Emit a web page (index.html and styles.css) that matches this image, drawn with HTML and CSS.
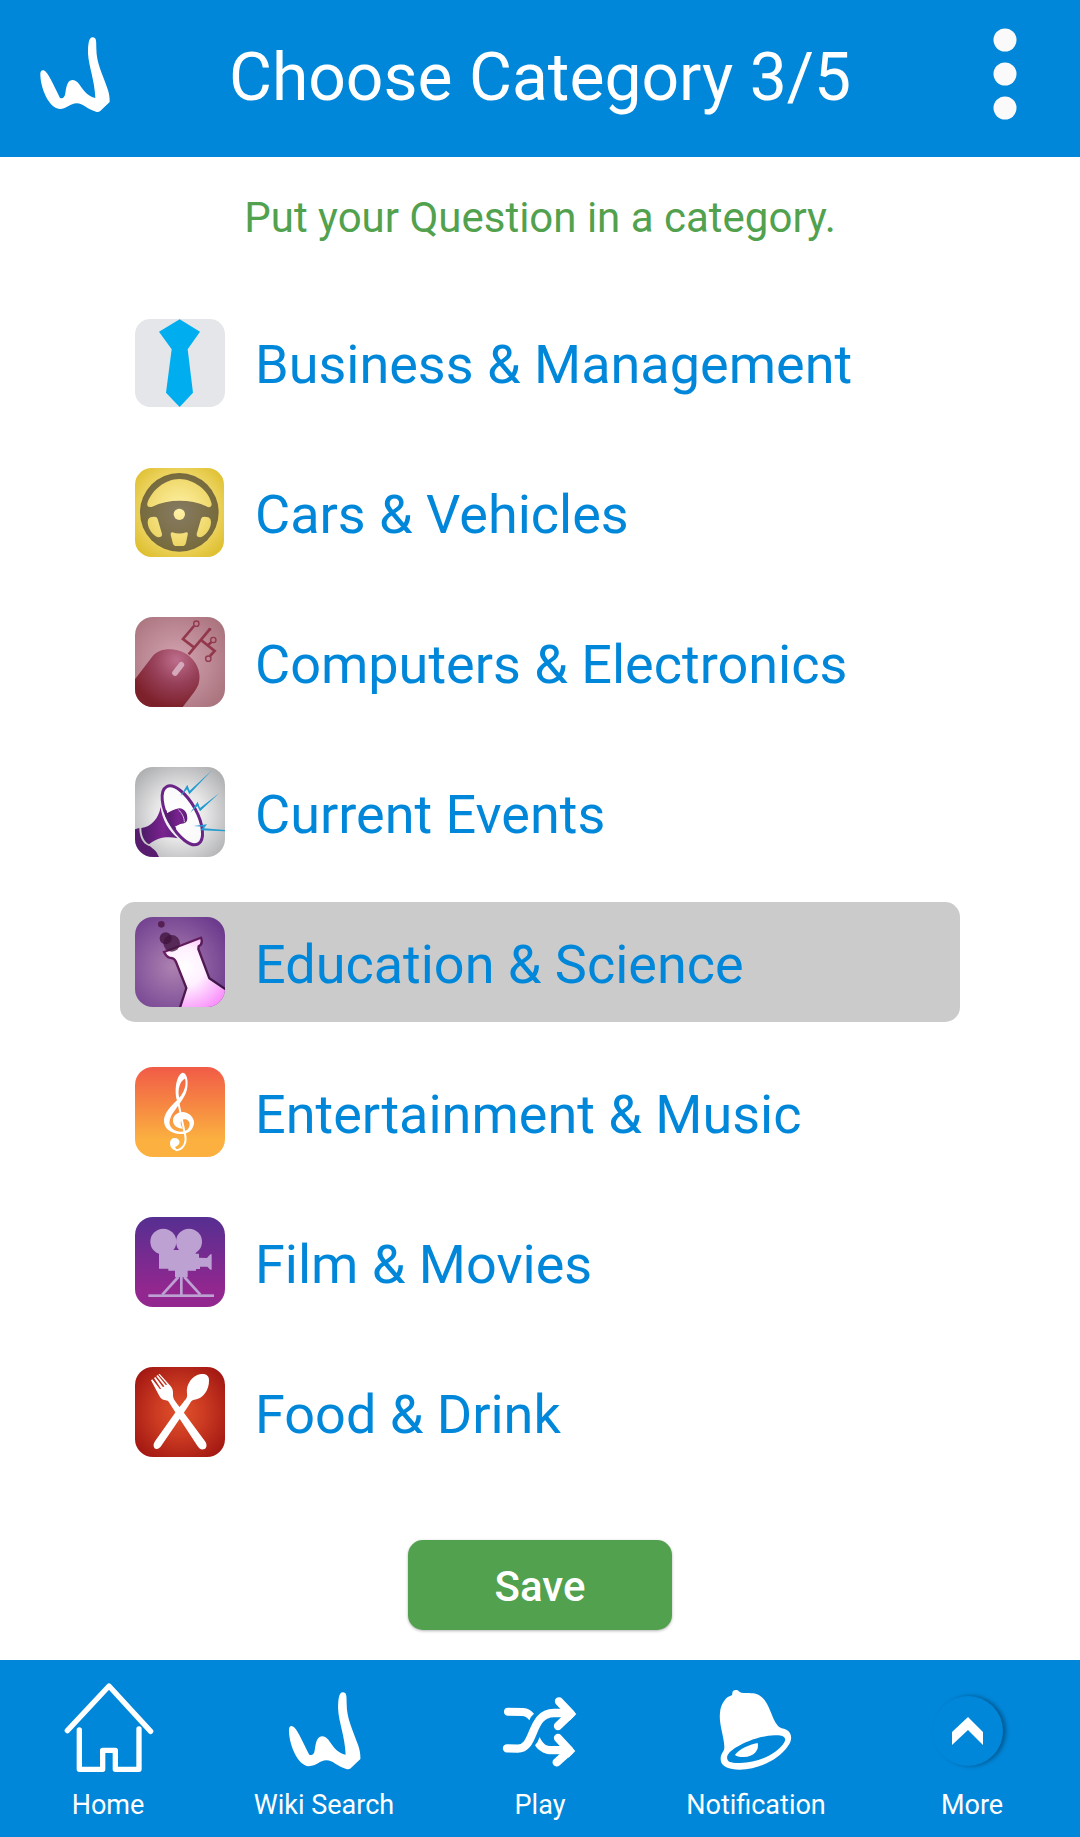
FILE: index.html
```html
<!DOCTYPE html>
<html lang="en">
<head>
    <meta charset="UTF-8">
    <meta name="viewport" content="width=device-width, initial-scale=1.0">
    <title>Choose Category</title>
    <link rel="stylesheet" href="styles.css">
</head>
<body>
    <header class="topbar">
        <a class="logo" href="#" aria-label="Wiki">
            <svg viewBox="61 51 208 225">
                <path id="w-mark" d="M61 160C62 152 66 149 71 151C84 155 99 193 120 234C128 236 134 234 136 220C140 190 146 180 158 180C182 180 184 224 226 234C224 180 206 140 204 100C204 74 206 52 218 52C229 52 229 62 229 85C229 130 247 160 262 205C268 222 269 232 269 246L240 274C236 276 232 276 228 275C200 268 190 250 170 250C150 250 142 267 119 267C85 265 60 200 61 160Z"/>
            </svg>
        </a>
        <h1>Choose Category 3/5</h1>
        <button class="menu" type="button" aria-label="Menu">
            <svg viewBox="0 0 24 92">
                <circle cx="12" cy="12" r="11.5"/>
                <circle cx="12" cy="46" r="11.5"/>
                <circle cx="12" cy="80" r="11.5"/>
            </svg>
        </button>
    </header>

    <form class="content">
        <p class="hint">Put your Question in a category.</p>

        <div class="categories">
            <label class="category">
                <input type="radio" name="category" value="business">
                <svg viewBox="30 21 270 270">
                    <rect x="30" y="27" width="270" height="264" rx="46" fill="#e4e6e9"/>
                    <path d="M164 28L225 65L188 118L204 248L164 291L123 248L140 118L102 65Z" fill="#00aeef"/>
                </svg>
                <span>Business &amp; Management</span>
            </label>

            <label class="category">
                <input type="radio" name="category" value="cars">
                <svg viewBox="30 471 270 270">
                    <defs>
                        <radialGradient id="gold" gradientUnits="userSpaceOnUse" cx="163" cy="600" r="180">
                            <stop offset="0" stop-color="#fff2a8"/>
                            <stop offset="0.55" stop-color="#efd86a"/>
                            <stop offset="1" stop-color="#dcbc28"/>
                        </radialGradient>
                        <radialGradient id="wheel" gradientUnits="userSpaceOnUse" cx="163" cy="607" r="120">
                            <stop offset="0" stop-color="#877b63"/>
                            <stop offset="1" stop-color="#766a3c"/>
                        </radialGradient>
                    </defs>
                    <rect x="30" y="474" width="267" height="267" rx="50" fill="url(#gold)"/>
                    <circle cx="163" cy="607" r="118" fill="url(#wheel)"/>
                    <g fill="url(#gold)">
                        <path d="M163 507C205 507 252 540 260 582C260 592 250 594 244 589C195 567 130 567 82 590C70 594 65 588 67 580C80 540 121 507 163 507Z"/>
                        <path d="M76 622L88 620Q96 620 98 627L111 672Q112 682 100 682C82 676 68 655 68 635Q68 626 76 622Z"/>
                        <path d="M250 622L238 620Q230 620 228 627L215 672Q214 682 226 682C244 676 258 655 258 635Q258 626 250 622Z"/>
                        <path d="M142 667Q163 674 184 667Q190 667 188 674L183 698Q181 708 171 708L155 708Q145 708 143 698L137 674Q136 667 142 667Z"/>
                        <circle cx="163" cy="613" r="17"/>
                    </g>
                </svg>
                <span>Cars &amp; Vehicles</span>
            </label>

            <label class="category">
                <input type="radio" name="category" value="computers">
                <svg class="rounded" viewBox="30 21 270 270">
                    <defs>
                        <radialGradient id="rose" gradientUnits="userSpaceOnUse" cx="155" cy="155" r="180">
                            <stop offset="0" stop-color="#d3a5b2"/>
                            <stop offset="1" stop-color="#a9727c"/>
                        </radialGradient>
                        <radialGradient id="mouse" gradientUnits="userSpaceOnUse" cx="155" cy="150" r="145">
                            <stop offset="0" stop-color="#bd6e8c"/>
                            <stop offset="0.5" stop-color="#963f58"/>
                            <stop offset="1" stop-color="#7c2029"/>
                        </radialGradient>
                    </defs>
                    <rect x="30" y="21" width="270" height="270" fill="url(#rose)"/>
                    <path d="M30 208L85 136C105 113 150 112 180 130C215 150 232 190 220 224C213 242 190 268 173 291H30Z" fill="url(#mouse)"/>
                    <path d="M150 189L169 164" stroke="#d6a8bb" stroke-width="17" stroke-linecap="round"/>
                    <g fill="none" stroke="#93384c" stroke-width="8">
                        <path d="M191 133L254 58M207 112L174 87L207 48M227 89L269 123L255 138M248 106L259 97"/>
                        <circle cx="214" cy="41" r="8" stroke-width="4"/>
                        <circle cx="265" cy="90" r="8" stroke-width="4"/>
                        <circle cx="250" cy="146" r="8" stroke-width="4"/>
                    </g>
                    <circle cx="254" cy="58" r="5" fill="#93384c"/>
                </svg>
                <span>Computers &amp; Electronics</span>
            </label>

            <label class="category">
                <input type="radio" name="category" value="events">
                <svg class="rounded" viewBox="30 21 270 270">
                    <defs>
                        <radialGradient id="silver" gradientUnits="userSpaceOnUse" cx="165" cy="165" r="190">
                            <stop offset="0" stop-color="#ffffff"/>
                            <stop offset="0.4" stop-color="#e6e6e7"/>
                            <stop offset="1" stop-color="#a5a6a8"/>
                        </radialGradient>
                        <linearGradient id="horn" x1="0" y1="0" x2="1" y2="0">
                            <stop offset="0" stop-color="#4d1a66"/>
                            <stop offset="0.6" stop-color="#7a2390"/>
                            <stop offset="1" stop-color="#5b1f78"/>
                        </linearGradient>
                    </defs>
                    <rect x="30" y="21" width="270" height="270" fill="url(#silver)"/>
                    <path d="M107 141C100 178 78 200 49 204C49 227 57 245 72 253C100 231 128 229 158 235C132 212 111 180 107 141Z" fill="url(#horn)"/>
                    <path d="M30 208L43 204C43 230 52 250 70 257C78 258 80 264 86 268C95 274 97 283 102 291H30Z" fill="#571c6e"/>
                    <ellipse cx="172" cy="166" rx="43" ry="98" transform="rotate(-29 172 166)" fill="#ffffff" fill-opacity="0.8" stroke="#6a2387" stroke-width="9"/>
                    <path d="M120 163C133 156 146 148 162 145C178 144 188 160 187 176C186 188 178 190 166 192L148 201C136 193 124 178 120 163Z" fill="url(#horn)"/>
                    <path d="M121 151C124 172 136 196 152 207" fill="none" stroke="#5b1f78" stroke-width="7"/>
                    <path d="M160 149C170 158 178 172 178 187" fill="none" stroke="#d5bede" stroke-width="3"/>
                    <g fill="#229bd0">
                        <path d="M166 109L187 74L194 92L261 31L193 103L186 88Z"/>
                        <path d="M196 158L218 125L225 144L283 99L225 154L217 138Z"/>
                        <path d="M206 198L246 193L237 205L300 210V214L226 211L235 200Z"/>
                    </g>
                </svg>
                <span>Current Events</span>
            </label>

            <label class="category">
                <input type="radio" name="category" value="education" checked>
                <svg class="rounded" viewBox="75 66 270 270">
                    <defs>
                        <radialGradient id="violet" gradientUnits="userSpaceOnUse" cx="190" cy="215" r="185">
                            <stop offset="0" stop-color="#ad82b1"/>
                            <stop offset="1" stop-color="#6d3b8e"/>
                        </radialGradient>
                        <radialGradient id="glass" gradientUnits="userSpaceOnUse" cx="225" cy="215" r="145">
                            <stop offset="0" stop-color="#ffffff"/>
                            <stop offset="0.4" stop-color="#fff0ff"/>
                            <stop offset="1" stop-color="#f990fb"/>
                        </radialGradient>
                        <linearGradient id="edge" x1="0" y1="0" x2="1" y2="1">
                            <stop offset="0" stop-color="#722064"/>
                            <stop offset="1" stop-color="#2b123f"/>
                        </linearGradient>
                    </defs>
                    <rect x="75" y="66" width="270" height="270" fill="url(#violet)"/>
                    <path d="M162 171L273 128C277 138 277 148 266 154L265 162L298 250L352 286V350H206L229 279L198 201C193 188 186 190 178 188C169 186 166 178 162 171Z" fill="url(#glass)" stroke="url(#edge)" stroke-width="7"/>
                    <circle cx="154" cy="88" r="10" fill="#552051"/>
                    <circle cx="167" cy="130" r="18" fill="#40143e" fill-opacity="0.8"/>
                    <circle cx="185" cy="145" r="25" fill="#40143e" fill-opacity="0.75"/>
                </svg>
                <span>Education &amp; Science</span>
            </label>

            <label class="category">
                <input type="radio" name="category" value="music">
                <svg class="rounded" viewBox="30 21 270 270">
                    <defs>
                        <linearGradient id="sunset" x1="0" y1="0" x2="0" y2="1">
                            <stop offset="0" stop-color="#f15b47"/>
                            <stop offset="0.5" stop-color="#f78f42"/>
                            <stop offset="0.8" stop-color="#fbb040"/>
                            <stop offset="1" stop-color="#fbb040"/>
                        </linearGradient>
                    </defs>
                    <rect x="30" y="21" width="270" height="270" fill="url(#sunset)"/>
                    <path d="M156 121C148 95 152 48 172 38C186 38 190 62 187 82C184 108 165 128 152 148C136 168 131 185 135 196C142 213 165 219 180 213C194 208 198 190 190 182C180 174 168 178 167 187C167 196 170 200 174 206C156 206 143 195 144 180C145 162 167 152 184 158C201 164 209 180 207 191C203 211 190 222 166 222C136 221 116 205 117 180C118 158 140 136 156 121ZM163 113C156 90 166 60 180 56C185 71 179 96 163 113Z" fill="#ffffff" fill-rule="evenodd"/>
                    <path d="M160 128L181 228C185 252 172 270 152 271" fill="none" stroke="#ffffff" stroke-width="6"/>
                    <path d="M135 250C135 238 143 233 151 234C161 235 165 243 163 250C161 257 153 259 150 261L157 272C144 272 135 263 135 250Z" fill="#ffffff"/>
                </svg>
                <span>Entertainment &amp; Music</span>
            </label>

            <label class="category">
                <input type="radio" name="category" value="film">
                <svg class="rounded" viewBox="30 21 270 270">
                    <defs>
                        <linearGradient id="purple" x1="0" y1="0" x2="0" y2="1">
                            <stop offset="0" stop-color="#562f91"/>
                            <stop offset="0.8" stop-color="#92278f"/>
                            <stop offset="1" stop-color="#92278f"/>
                        </linearGradient>
                    </defs>
                    <rect x="30" y="21" width="270" height="270" fill="url(#purple)"/>
                    <g fill="#bda1d3">
                        <circle cx="115" cy="95" r="39"/>
                        <circle cx="192" cy="95" r="39"/>
                        <path d="M102 120H212V131H222V143L246 144L256 133H260V179H256L247 170H225V177H213V182H188V202H150V182H130V176H102Z"/>
                        <rect x="70" y="253" width="197" height="8"/>
                    </g>
                    <path d="M160 201L112 254M169 200V255M178 201L226 254" stroke="#bda1d3" stroke-width="8"/>
                </svg>
                <span>Film &amp; Movies</span>
            </label>

            <label class="category">
                <input type="radio" name="category" value="food">
                <svg class="rounded" viewBox="30 21 270 270">
                    <defs>
                        <radialGradient id="ember" gradientUnits="userSpaceOnUse" cx="165" cy="156" r="180">
                            <stop offset="0" stop-color="#e1522a"/>
                            <stop offset="0.4" stop-color="#cc3b22"/>
                            <stop offset="1" stop-color="#9d1310"/>
                        </radialGradient>
                    </defs>
                    <rect x="30" y="21" width="270" height="270" fill="url(#ember)"/>
                    <g fill="#ffffff">
                        <path d="M252 60C252 46 242 41 228 42C202 46 182 72 186 102C188 114 181 119 174 128L158 148L91 242C82 254 86 266 94 267C102 267 106 262 110 256L174 162L190 138C197 127 198 121 208 119C234 117 253 90 252 60Z"/>
                        <path d="M78 61L82 58L105 88L108 86L87 54L91 51L114 82L118 79L94 48L98 45L123 76L126 73L100 43L104 42L136 77C146 89 144 98 144 107C145 117 149 121 156 131L170 149L239 242C249 255 244 266 236 268C228 270 222 265 217 257L155 163L139 138C131 124 130 121 118 120C108 118 104 110 98 98Z"/>
                    </g>
                </svg>
                <span>Food &amp; Drink</span>
            </label>
        </div>

        <button class="save" type="submit">Save</button>
    </form>

    <nav class="tabbar">
        <a href="#">
            <svg viewBox="69 66 270 270">
                <path d="M82 212L207 78L332 214M118 210V328H188V271H226V328H297V207" fill="none" stroke="#ffffff" stroke-width="16" stroke-linecap="round" stroke-linejoin="round"/>
            </svg>
            <span>Home</span>
        </a>
        <a href="#">
            <svg viewBox="32 22 262 262">
                <use href="#w-mark"/>
            </svg>
            <span>Wiki Search</span>
        </a>
        <a href="#">
            <svg viewBox="45 66 270 270">
                <g fill="none" stroke="#ffffff" stroke-width="25" stroke-linecap="round" stroke-linejoin="round">
                    <path d="M81 265L112 266C168 268 148 159 222 159H265"/>
                    <path d="M237 124L272 161L234 198M234 234L269 272L230 307"/>
                </g>
                <path d="M84 143L130 144C144 145 154 151 162 161Q152 169 148 181C140 171 135 168 126 168L84 167Q72 166 72 155Q72 143 84 143Z"/>
                <path d="M179 231C186 247 195 257 209 258H255V283H209C190 281 174 271 165 256Q174 247 179 231Z"/>
                <path d="M268 142L289 162L268 183ZM265 253L286 273L265 294Z"/>
            </svg>
            <span>Play</span>
        </a>
        <a href="#">
            <svg viewBox="693 66 270 270">
                <path fill-rule="evenodd" d="M757 101C756 92 763 89 769 90C776 90 777 97 784 98C805 100 823 96 840 107C870 127 872 172 894 198C899 205 910 205 919 209C939 220 936 243 924 258C898 298 839 327 779 329C747 328 721 319 722 297C721 280 734 275 733 260C732 228 716 192 720 158C722 132 738 110 752 107C755 106 757 104 757 101ZM742 297C738 286 750 273 770 261C800 244 840 227 884 226C909 225 921 232 913 247C894 279 838 309 780 309C759 309 744 308 742 297Z"/>
                <path d="M765 284C781 266 805 255 833 249C839 270 820 291 792 291C778 291 767 288 765 284Z"/>
            </svg>
            <span>Notification</span>
        </a>
        <a href="#">
            <svg viewBox="0 0 90 90">
                <circle class="more-disc" cx="41" cy="49" r="35"/>
                <path d="M41 35L56 50V63L41 48L25 63V50Z"/>
            </svg>
            <span>More</span>
        </a>
    </nav>
</body>
</html>
```
FILE: styles.css
```css
* {
    box-sizing: border-box;
}

body {
    font-family: Roboto, 'Noto Sans', sans-serif;
    background-color: #fff;
    margin: 0;
    display: flex;
    flex-direction: column;
    min-height: 100vh;
}

svg {
    display: block;
    flex: none;
}

button {
    border: none;
    font-family: inherit;
    cursor: pointer;
}

/* Header */
.topbar {
    display: grid;
    grid-template-columns: 80px 1fr 80px;
    align-items: center;
    background-color: #0087da;
    padding: 28px 40px 29px;
}

.topbar h1 {
    margin: 0;
    color: #fff;
    font-size: 66px;
    font-weight: 400;
    line-height: 100px;
    text-align: center;
}

.logo {
    padding-bottom: 8px;
}

.logo svg {
    width: 70px;
    height: 75px;
    fill: #fff;
}

.menu {
    background: none;
    padding: 0 23px 8px;
    justify-self: end;
}

.menu svg {
    width: 24px;
    height: 92px;
    fill: #fafafa;
}

/* Category list */
.content {
    flex: 1;
    display: flex;
    flex-direction: column;
    align-items: center;
    padding: 31px 120px 30px;
}

.hint {
    margin: 0 0 54px;
    color: #52a14e;
    font-size: 42px;
    line-height: 60px;
}

.categories {
    display: flex;
    flex-direction: column;
    gap: 30px;
    width: 100%;
    margin-bottom: 68px;
}

.category {
    position: relative;
    display: flex;
    align-items: center;
    gap: 30px;
    padding: 15px;
    border-radius: 15px;
    color: #0087da;
    font-size: 54px;
    line-height: 60px;
    cursor: pointer;
}

.category:has(input:checked) {
    background-color: #cbcbcb;
}

.category input {
    position: absolute;
    opacity: 0;
}

.category span {
    padding-top: 6px;
}

.category svg {
    width: 90px;
    height: 90px;
}

.category .rounded {
    border-radius: 18px;
}

.save {
    width: 264px;
    height: 90px;
    padding: 2px 0 0;
    border-radius: 15px;
    background-color: #52a14e;
    box-shadow: 0 1px 3px rgba(0, 0, 0, 0.3);
    color: #fff;
    font-size: 42px;
    font-weight: 500;
}

/* Bottom navigation */
.tabbar {
    display: grid;
    grid-template-columns: repeat(5, 1fr);
    background-color: #0087da;
    padding: 22px 0 12px;
}

.tabbar a {
    display: flex;
    flex-direction: column;
    align-items: center;
    gap: 13px;
    color: #fff;
    font-size: 27px;
    line-height: 40px;
    text-decoration: none;
}

.tabbar svg {
    width: 90px;
    height: 90px;
    fill: #fff;
    overflow: visible;
}

.more-disc {
    fill: #0087da;
    filter: drop-shadow(3px 0 2px rgba(0, 0, 0, 0.35));
}
```
